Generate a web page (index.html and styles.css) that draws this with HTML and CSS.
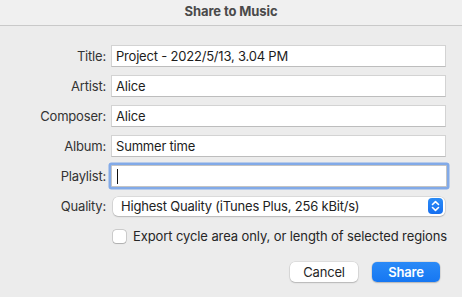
FILE: index.html
```html
<!DOCTYPE html>
<html lang="en">
<head>
<meta charset="utf-8">
<title>Share to Music</title>
<link rel="stylesheet" href="styles.css">
</head>
<body>
<div class="dialog">
  <header class="titlebar">Share to Music</header>
  <main class="content">
    <div class="form">
      <label class="label">Title:</label>
      <div class="field">Project - 2022/5/13, 3.04 PM</div>
      <label class="label">Artist:</label>
      <div class="field">Alice</div>
      <label class="label">Composer:</label>
      <div class="field">Alice</div>
      <label class="label">Album:</label>
      <div class="field">Summer time</div>
      <label class="label">Playlist:</label>
      <div class="field focused"><span class="caret"></span></div>
      <label class="label">Quality:</label>
      <div class="popup">
        <span>Highest Quality (iTunes Plus, 256 kBit/s)</span>
        <span class="stepper">
          <svg width="9" height="12" viewBox="0 0 9 12"><path d="M1.5 4.5 L4.5 1.6 L7.5 4.5 M1.5 7.5 L4.5 10.4 L7.5 7.5" fill="none" stroke="#fff" stroke-width="1.6" stroke-linecap="round" stroke-linejoin="round"/></svg>
        </span>
      </div>
      <span></span>
      <div class="check-row">
        <span class="checkbox"></span>
        <span>Export cycle area only, or length of selected regions</span>
      </div>
    </div>
    <div class="buttons">
      <button class="btn">Cancel</button>
      <button class="btn primary">Share</button>
    </div>
  </main>
</div>
</body>
</html>
```

FILE: styles.css
```css
html, body {
  margin: 0;
  padding: 0;
  background: #ececec;
}
body {
  width: 462px;
  height: 297px;
  overflow: hidden;
  font-family: Inter, "Liberation Sans", sans-serif;
  font-size: 13px;
  letter-spacing: -0.2px;
  color: #1f1f1f;
}
.dialog {
  display: flex;
  flex-direction: column;
  height: 297px;
}
.titlebar {
  height: 25px;
  line-height: 22px;
  background: #f0f0f0;
  border-bottom: 1px solid #c9c9c9;
  text-align: center;
  font-weight: 700;
  font-size: 13px;
  letter-spacing: -0.1px;
  color: #4a4a4a;
}
.content {
  padding-top: 19px;
}
.form {
  display: grid;
  grid-template-columns: 106px 335px;
  grid-auto-rows: 22px;
  column-gap: 5px;
  row-gap: 8px;
  align-items: center;
}
.label {
  text-align: right;
  color: #333333;
}
.field {
  height: 22px;
  box-sizing: border-box;
  background: #ffffff;
  border: 1px solid #d3d3d3;
  border-bottom-color: #bdbdbd;
  padding: 0 4px;
  line-height: 20px;
  color: #1c1c1c;
}
.field.focused {
  border-color: #c4c4c4;
  box-shadow: 0 0 0 2.5px #82aae8;
  border-radius: 1px;
  width: 336px;
  display: flex;
  align-items: center;
}
.caret {
  width: 1px;
  height: 15px;
  background: #111;
  margin-left: 1px;
}
.popup {
  margin-left: 2px;
  width: 332px;
  height: 19px;
  box-sizing: border-box;
  background: #fff;
  border-radius: 5px;
  box-shadow: 0 0 0 0.5px rgba(0,0,0,0.14), 0 1px 1.5px rgba(0,0,0,0.16);
  display: flex;
  align-items: center;
  justify-content: space-between;
  padding: 0 2px 0 8px;
  color: #222;
}
.stepper {
  width: 15px;
  height: 16px;
  border-radius: 4px;
  background: linear-gradient(#2b8cf7, #166ff0);
  display: flex;
  align-items: center;
  justify-content: center;
}
.check-row {
  display: flex;
  align-items: center;
  gap: 7px;
  margin-left: 2px;
  white-space: nowrap;
  letter-spacing: -0.1px;
  color: #262626;
}
.checkbox {
  width: 13px;
  height: 13px;
  flex: none;
  border-radius: 3px;
  background: #fff;
  box-shadow: 0 0 0 0.5px rgba(0,0,0,0.25), 0 0.5px 1px rgba(0,0,0,0.15);
}
.buttons {
  display: flex;
  justify-content: flex-end;
  gap: 14px;
  padding-right: 22px;
  margin-top: 15px;
}
.btn {
  width: 68px;
  height: 20px;
  border: none;
  border-radius: 5px;
  background: #fff;
  box-shadow: 0 0 0 0.5px rgba(0,0,0,0.12), 0 1px 1.5px rgba(0,0,0,0.18);
  font-family: Inter, "Liberation Sans", sans-serif;
  font-size: 13px;
  letter-spacing: -0.2px;
  color: #262626;
  padding: 0;
}
.btn.primary {
  background: linear-gradient(#2a8af7, #1677f2);
  color: #fff;
  font-weight: 600;
}
```
